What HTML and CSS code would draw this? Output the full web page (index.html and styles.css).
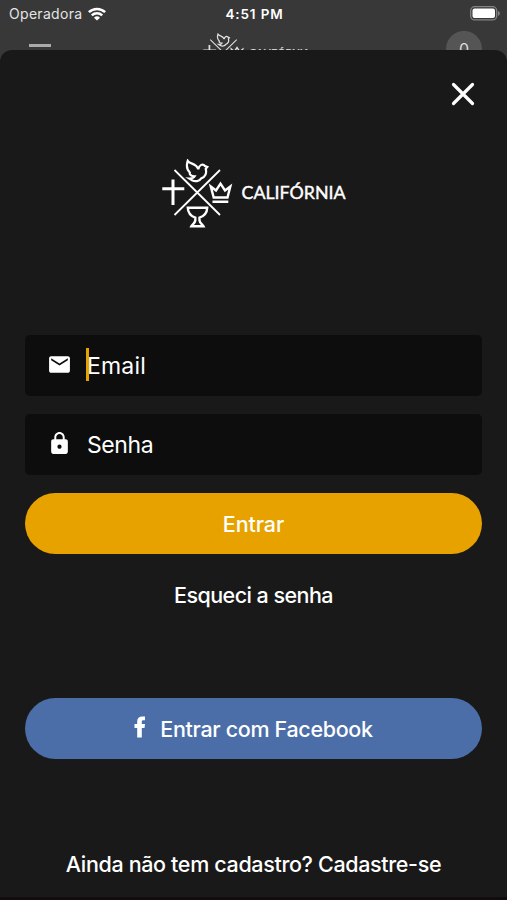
FILE: index.html
```html
<!DOCTYPE html>
<html lang="pt-BR">
<head>
    <meta charset="UTF-8">
    <meta name="viewport" content="width=device-width, initial-scale=1.0">
    <title>Califórnia</title>
    <link rel="stylesheet" href="styles.css">
</head>
<body>
    <svg class="symbols">
        <symbol id="logo" viewBox="0 0 184 70">
            <g fill="none" stroke="#fff" stroke-width="2.4">
                <path stroke-width="1.8" d="M12.5 11 58 56M58 11 12.5 56"/>
                <path stroke-width="3" d="M11 20.5V46M.3 29.8H22.3"/>
                <path d="M48.8 27.5 54 31.500 58.5 24.7 63 31.500 68.3 27.5 65.5 38.5H51.700ZM50.5 42.800H66.3"/>
                <path d="M25.800 48.8H45.2C45 55 41 57.500 37.500 58.700V61.500C38 64.500 40.500 65 41.500 67.300H29.300C30.300 65 32.900 64.500 33.300 61.500V58.700C30 57.500 26 55 25.800 48.800Z"/>
                <path stroke-width="2.200" d="M25.700 1.800C28 5.500 34.500 4 36.300 10.300C37.200 5.700 40.800 4.200 43 7L45.300 7.900 43.700 9.900C45 14 43.200 18.200 39.200 19.400C37.300 22.500 33 22.700 30.500 21.500L27.300 19.500C30 19.600 31.800 18.800 32.700 17.300C29 17 27.300 15.500 27.800 13.500C24.300 10 24.500 5.500 25.700 1.800Z"/>
            </g>
            <text class="logo-text" x="79.500" y="39.500" textLength="104" lengthAdjust="spacingAndGlyphs">CALIFÓRNIA</text>
        </symbol>
    </svg>

    <div class="app">
        <div class="status-bar">
            <div class="carrier">
                <span>Operadora</span>
                <svg class="wifi" viewBox="0 0 18 14">
                    <path fill="none" stroke="#fff" stroke-width="2.5" d="M.9 5.2a11.6 11.6 0 0 1 16.2 0M3.8 8.3a7.4 7.4 0 0 1 10.4 0"/>
                    <path fill="#fff" d="M9 13.6 6 10.7a4.3 4.3 0 0 1 6 0z"/>
                </svg>
            </div>
            <span class="clock">4:51 PM</span>
            <svg class="battery" viewBox="0 0 30 15">
                <rect x=".7" y=".7" width="26" height="13.2" rx="4" fill="none" stroke="#838383" stroke-width="1.3"/>
                <rect x="2.5" y="2.5" width="22.5" height="9.6" rx="2" fill="#fff"/>
                <path fill="#838383" d="M28 5v4.8c2.4-.8 2.4-4 0-4.8z"/>
            </svg>
        </div>

        <div class="navbar">
            <span class="menu"></span>
            <svg class="navbar-logo"><use href="#logo"/></svg>
            <span class="avatar">0</span>
        </div>

        <main class="sheet">
            <button class="close" aria-label="Fechar">
                <svg viewBox="0 0 24 24"><path fill="none" stroke="#fff" stroke-width="3.2" stroke-linecap="round" d="M2.5 2.5 21.5 21.5M21.5 2.5 2.5 21.5"/></svg>
            </button>

            <svg class="logo"><use href="#logo"/></svg>

            <form class="login">
                <label class="field">
                    <svg class="field-icon" viewBox="0 0 24 24"><path fill="#fff" d="M20 4H4c-1.1 0-2 .9-2 2v12c0 1.1.9 2 2 2h16c1.1 0 2-.9 2-2V6c0-1.1-.9-2-2-2zm0 4-8 5-8-5V6l8 5 8-5v2z"/></svg>
                    <span class="placeholder email">Email</span>
                    <span class="caret"></span>
                </label>
                <label class="field">
                    <svg class="field-icon" viewBox="0 0 24 24"><path fill="#fff" d="M18 8h-1V6c0-2.76-2.24-5-5-5S7 3.24 7 6v2H6c-1.1 0-2 .9-2 2v10c0 1.1.9 2 2 2h12c1.1 0 2-.9 2-2V10c0-1.1-.9-2-2-2zm-6 9c-1.1 0-2-.9-2-2s.9-2 2-2 2 .9 2 2-.9 2-2 2zm3.1-9H8.900V6c0-1.71 1.390-3.1 3.1-3.1s3.1 1.390 3.1 3.1v2z"/></svg>
                    <span class="placeholder">Senha</span>
                </label>
                <button type="button" class="button primary">Entrar</button>
            </form>

            <a class="link forgot">Esqueci a senha</a>

            <button class="button facebook">
                <svg class="facebook-icon" viewBox="0 0 12 22"><path fill="#fff" d="M3.2 21.500V12H.5V8h2.700V5.500C3.200 2.200 5.200.5 8.300.5h2.700V4.200H9.300C8.200 4.200 7.800 4.700 7.800 5.800V8h3.200l-.5 4H7.800v9.500z"/></svg>
                <span>Entrar com Facebook</span>
            </button>

            <a class="link signup">Ainda não tem cadastro? Cadastre-se</a>
        </main>
    </div>
</body>
</html>
```

FILE: styles.css
```css
* {
    box-sizing: border-box;
}

body {
    margin: 0;
    background: #383838;
    color: #fff;
    font-family: Inter, "Liberation Sans", sans-serif;
}

button {
    padding: 0;
    border: none;
    background: none;
    color: inherit;
    font: inherit;
}

.symbols {
    position: absolute;
    width: 0;
    height: 0;
}

.app {
    display: flex;
    flex-direction: column;
    height: 900px;
    overflow: hidden;
}

.status-bar {
    display: grid;
    grid-template-columns: 1fr auto 1fr;
    align-items: center;
    height: 27px;
    flex: none;
    padding: 0 7px 0 9px;
    font-size: 14px;
}

.carrier {
    display: flex;
    align-items: center;
    gap: 6px;
    color: #e4e4e4;
    letter-spacing: 0.3px;
}

.wifi {
    width: 18px;
    height: 14px;
}

.clock {
    font-weight: 600;
    font-size: 13.5px;
    letter-spacing: 0.85px;
}

.battery {
    width: 30px;
    height: 15px;
    justify-self: end;
}

.navbar {
    display: flex;
    justify-content: space-between;
    align-items: flex-start;
    height: 23px;
    flex: none;
    padding: 4px 25px 0 29px;
}

.menu {
    width: 22px;
    height: 3px;
    margin-top: 13px;
    background: #aaa;
}

.navbar-logo {
    width: 107px;
    height: 41px;
    margin: 2px 0 0 15px;
    opacity: 0.85;
}

.avatar {
    width: 36px;
    height: 36px;
    border-radius: 50%;
    background: #555;
    color: #ddd;
    font-size: 16px;
    line-height: 37px;
    text-align: center;
}

.sheet {
    position: relative;
    display: flex;
    flex-direction: column;
    align-items: center;
    height: 850px;
    flex: none;
    padding: 32px 25px 0;
    border-bottom: 3px solid #120c0e;
    border-radius: 12px 12px 0 0;
    background: #191919;
}

.close {
    align-self: flex-end;
    width: 24px;
    height: 24px;
    margin-right: 7px;
}

.close svg {
    display: block;
    width: 24px;
    height: 24px;
}

.logo {
    width: 184px;
    height: 70px;
    margin-top: 53px;
    flex: none;
}

.logo-text {
    fill: #fff;
    stroke: #fff;
    stroke-width: 0.4px;
    font: 400 17px Lato, sans-serif;
}

.login {
    display: flex;
    flex-direction: column;
    gap: 18px;
    width: 100%;
    margin-top: 106px;
}

.field {
    display: flex;
    align-items: center;
    position: relative;
    height: 61px;
    padding-left: 22px;
    border-radius: 5px;
    background: #0d0d0d;
    font-size: 23px;
}

.field-icon {
    width: 25px;
    height: 25px;
    margin: -3px 15px 0 0;
}

.caret {
    position: absolute;
    left: 61px;
    top: 13px;
    width: 3px;
    height: 33px;
    background: #e8a200;
}

.placeholder {
    letter-spacing: -0.4px;
}

.email {
    letter-spacing: 0.2px;
}

.button {
    display: flex;
    justify-content: center;
    align-items: center;
    width: 100%;
    height: 61px;
    border-radius: 31px;
    font-size: 21.5px;
    font-weight: 500;
    letter-spacing: -0.1px;
}

.primary {
    background: #e8a200;
}

.link {
    font-size: 21.5px;
    font-weight: 500;
    line-height: 28px;
    letter-spacing: -0.35px;
}

.forgot {
    margin-top: 27px;
    letter-spacing: -0.55px;
}

.facebook {
    gap: 14px;
    margin-top: 89px;
    background: #4b6ea9;
    letter-spacing: -0.33px;
}

.facebook-icon {
    width: 12px;
    height: 22px;
    margin-top: -3px;
}

.signup {
    margin-top: 91px;
}
```
